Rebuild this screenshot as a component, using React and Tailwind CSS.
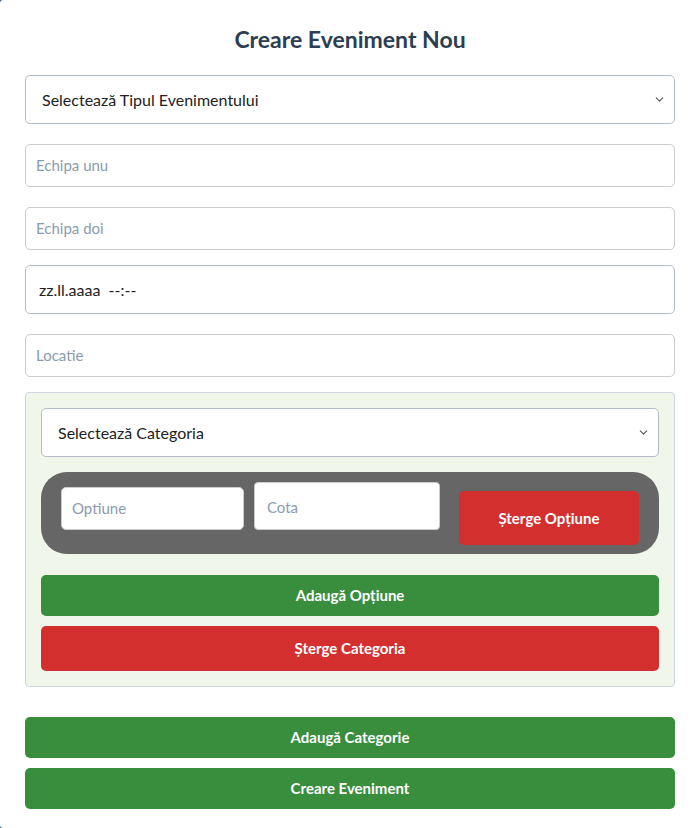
import { ChevronDown } from 'lucide-react';

const font = { fontFamily: '"Segoe UI", Lato, "Noto Sans", sans-serif' };

function Select({ label, className = '' }) {
  return (
    <div
      className={`flex h-[49px] items-center justify-between rounded-[5px] border border-[#b3bcc8] bg-white pl-[16px] pr-[8px] text-[16px] text-[#222] ${className}`}
    >
      <span>{label}</span>
      <ChevronDown className="h-[13px] w-[13px] text-[#555]" strokeWidth={2} />
    </div>
  );
}

function Field({ placeholder }) {
  return (
    <div className="flex h-[43px] items-center rounded-[5px] border border-[#c9ccd0] bg-white px-[10px] text-[15px] text-[#8b9bb0]">
      {placeholder}
    </div>
  );
}

function ActionButton({ label, tone = 'green', className = '' }) {
  const colour = tone === 'green' ? 'bg-[#388e3c]' : 'bg-[#d32f2f]';
  return (
    <div
      className={`flex items-center justify-center rounded-[5px] text-[15px] font-bold text-white ${colour} ${className}`}
    >
      {label}
    </div>
  );
}

export default function App() {
  return (
    <div className="min-h-[828px] bg-[#2d4f73]" style={font}>
      <div className="min-h-[828px] rounded-l-[3px] bg-white pl-[25px] pr-[21px] pt-[24px] pb-[19px]">
        <h1 className="text-center text-[23px] font-bold leading-[30px] text-[#2c3e50]">Creare Eveniment Nou</h1>

        <Select label="Selectează Tipul Evenimentului" className="mt-[21px]" />

        <div className="mt-[20px]">
          <Field placeholder="Echipa unu" />
        </div>
        <div className="mt-[20px]">
          <Field placeholder="Echipa doi" />
        </div>

        <div className="mt-[15px] flex h-[49px] items-center whitespace-pre rounded-[5px] border border-[#b3bcc8] bg-white px-[13px] text-[16px] text-[#222]">
          zz.ll.aaaa  --:--
        </div>

        <div className="mt-[20px]">
          <Field placeholder="Locatie" />
        </div>

        <div className="mt-[15px] rounded-[4px] border border-[#cfd6de] bg-[#f1f6ea] px-[15px] pt-[15px] pb-[15px]">
          <Select label="Selectează Categoria" />

          <div className="mt-[15px] flex h-[82px] items-start rounded-[26px] bg-[#666666] px-[20px]">
            <div className="mt-[15px] w-[183px]">
              <Field placeholder="Optiune" />
            </div>
            <div className="mt-[10px] ml-[10px] flex h-[48px] w-[186px] items-start rounded-[4px] border border-[#c9ccd0] bg-white px-[12px] pt-[13px] text-[15px] text-[#8b9bb0]">
              Cota
            </div>
            <ActionButton label="Șterge Opțiune" tone="red" className="mt-[19px] ml-[19px] h-[54px] w-[180px]" />
          </div>

          <ActionButton label="Adaugă Opțiune" className="mt-[21px] h-[41px]" />
          <ActionButton label="Șterge Categoria" tone="red" className="mt-[10px] h-[45px]" />
        </div>

        <ActionButton label="Adaugă Categorie" className="mt-[30px] h-[41px]" />
        <ActionButton label="Creare Eveniment" className="mt-[10px] h-[41px]" />
      </div>
    </div>
  );
}
